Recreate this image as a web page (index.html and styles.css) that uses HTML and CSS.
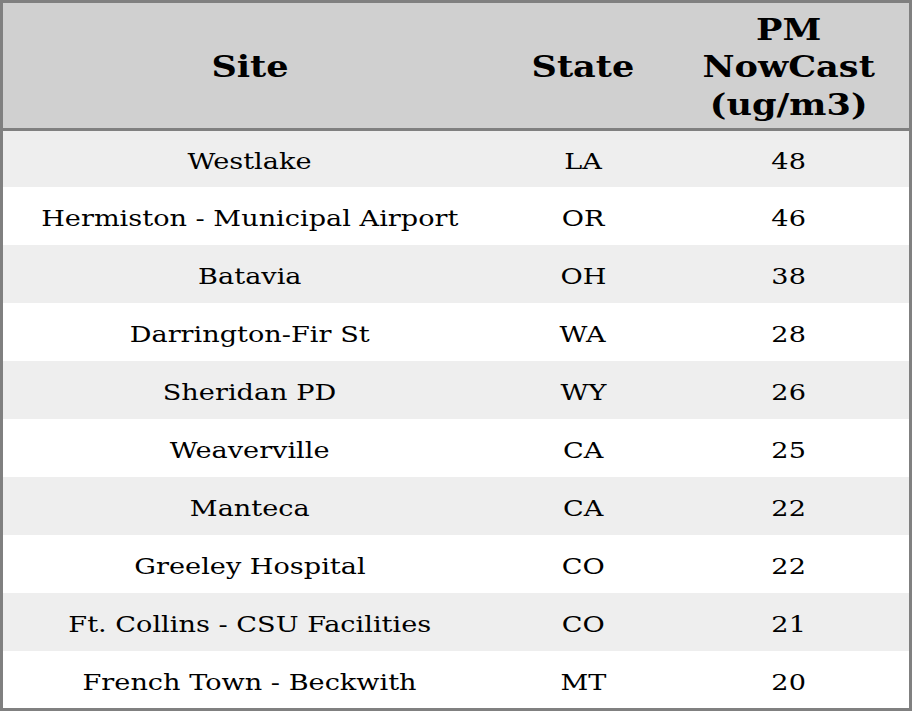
FILE: index.html
```html
<!DOCTYPE html>
<html>
<head>
<meta charset="utf-8">
<link rel="stylesheet" href="styles.css">
</head>
<body>
<table class="aq">
  <colgroup>
    <col class="c-site"><col class="c-state"><col class="c-pm">
  </colgroup>
  <thead>
    <tr><th><span>Site</span></th><th><span>State</span></th><th><span>PM<br>NowCast<br>(ug/m3)</span></th></tr>
  </thead>
  <tbody>
    <tr><td><span>Westlake</span></td><td><span>LA</span></td><td><span>48</span></td></tr>
    <tr><td><span>Hermiston - Municipal Airport</span></td><td><span>OR</span></td><td><span>46</span></td></tr>
    <tr><td><span>Batavia</span></td><td><span>OH</span></td><td><span>38</span></td></tr>
    <tr><td><span>Darrington-Fir St</span></td><td><span>WA</span></td><td><span>28</span></td></tr>
    <tr><td><span>Sheridan PD</span></td><td><span>WY</span></td><td><span>26</span></td></tr>
    <tr><td><span>Weaverville</span></td><td><span>CA</span></td><td><span>25</span></td></tr>
    <tr><td><span>Manteca</span></td><td><span>CA</span></td><td><span>22</span></td></tr>
    <tr><td><span>Greeley Hospital</span></td><td><span>CO</span></td><td><span>22</span></td></tr>
    <tr><td><span>Ft. Collins - CSU Facilities</span></td><td><span>CO</span></td><td><span>21</span></td></tr>
    <tr><td><span>French Town - Beckwith</span></td><td><span>MT</span></td><td><span>20</span></td></tr>
  </tbody>
</table>
</body>
</html>
```
FILE: styles.css
```css
html, body {
  margin: 0;
  padding: 0;
  background: #ffffff;
}
.aq {
  width: 912px;
  border-collapse: separate;
  border-spacing: 0;
  table-layout: fixed;
  border: 3px solid #808080;
  font-family: "DejaVu Serif", serif;
  color: #000;
}
.c-site { width: 494px; }
.c-state { width: 172px; }
.c-pm { width: 240px; }
.aq th {
  background: #d0d0d0;
  font-weight: bold;
  font-size: 30px;
  line-height: 37.5px;
  padding: 3px 0 0;
  box-sizing: border-box;
  height: 128px;
  text-align: center;
  vertical-align: middle;
  border-bottom: 3px solid #808080;
}
.aq td {
  font-size: 23px;
  box-sizing: border-box;
  height: 58px;
  padding: 4px 0 0;
  text-align: center;
  vertical-align: middle;
  white-space: nowrap;
}
.aq tbody tr:first-child td { height: 56px; }
.aq tbody tr:last-child td { height: 57px; }
.aq th span {
  display: inline-block;
  transform: scaleX(1.17);
}
.aq td span {
  display: inline-block;
  transform: scaleX(1.18);
}
.aq tbody tr:nth-child(odd) td {
  background: #eeeeee;
}
```
